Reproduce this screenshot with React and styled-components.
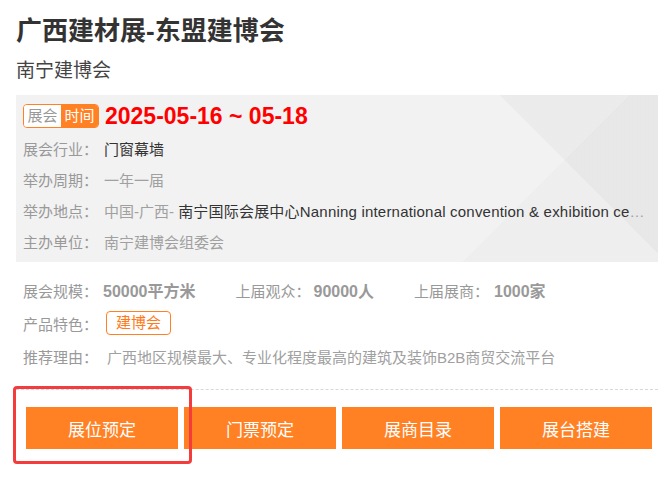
import React from "react";
import styled, { createGlobalStyle } from "styled-components";

const GlobalStyle = createGlobalStyle`
    html, body {
        margin: 0;
        padding: 0;
        background: #fff;
    }
    body {
        font-family: "Liberation Sans", "Noto Sans CJK SC", sans-serif;
        color: #333;
    }
    * {
        box-sizing: border-box;
    }
`;

const Page = styled.div`
    width: 669px;
    min-height: 480px;
    padding: 13px 11px 0 16px;
`;

const Title = styled.h1`
    margin: 0;
    font-size: 26px;
    font-weight: 700;
    line-height: 36px;
    color: #333;
`;

const SubTitle = styled.h2`
    margin: 8px 0 0;
    font-size: 19px;
    font-weight: 400;
    line-height: 28px;
    color: #444;
`;

// grey panel with the faint diagonal facets
const InfoPanel = styled.div`
    margin-top: 10px;
    height: 167px;
    padding: 9px 10px 0 7px;
    background-color: #f2f2f2;
    background-image: linear-gradient(45deg, transparent 460px, rgba(0, 0, 0, 0.028) 460px),
        linear-gradient(135deg, transparent 434px, rgba(0, 0, 0, 0.016) 434px);
`;

const DateRow = styled.div`
    display: flex;
    align-items: center;
    height: 24px;
    margin-bottom: 5px;
`;

const Badge = styled.span`
    display: flex;
    height: 24px;
    border: 1px solid #ff8124;
    border-radius: 4px;
    overflow: hidden;
    font-size: 15px;
    line-height: 22px;
`;

const BadgePart = styled.span`
    width: 37px;
    text-align: center;
    color: ${(props) => (props.filled ? "#fff" : "#999")};
    background: ${(props) => (props.filled ? "#ff8124" : "#fff")};
`;

const DateText = styled.span`
    margin-left: 6px;
    font-size: 23px;
    font-weight: 700;
    color: #f00;
    line-height: 24px;
`;

const Row = styled.div`
    display: flex;
    align-items: center;
    height: ${(props) => props.height || "31px"};
    font-size: 15px;
    white-space: nowrap;
`;

const Label = styled.span`
    flex: none;
    width: ${(props) => props.width || "81px"};
    color: #999;
`;

const Value = styled.span`
    flex: 1;
    min-width: 0;
    overflow: hidden;
    text-overflow: ellipsis;
    color: ${(props) => (props.dark ? "#333" : "#a0a0a0")};
`;

const Dark = styled.span`
    color: #333;
    letter-spacing: 0.2px;
`;

const Details = styled.div`
    padding: 12px 7px 0;
    display: flex;
    flex-direction: column;
    gap: 1px;
`;

const Stat = styled.span`
    display: flex;
    align-items: center;
    margin-right: 40px;
`;

const StatValue = styled.span`
    font-size: 16px;
    font-weight: 700;
    color: #999;
`;

const Tag = styled.span`
    display: inline-block;
    height: 24px;
    padding: 0 9px;
    border: 1px solid #ff8124;
    border-radius: 4px;
    color: #ff7a1a;
    font-size: 15px;
    line-height: 22px;
`;

const Divider = styled.div`
    margin-top: 17px;
    border-top: 1px dashed #d8d8d8;
`;

const Actions = styled.div`
    position: relative;
    display: grid;
    grid-template-columns: repeat(4, 152px);
    column-gap: 6px;
    margin-top: 17px;
    padding-left: 10px;
`;

const ActionButton = styled.button`
    height: 42px;
    border: none;
    padding: 0;
    background: #ff8124;
    color: #fff;
    font-family: "Liberation Sans", "Noto Sans CJK SC", sans-serif;
    font-size: 17px;
    cursor: pointer;
`;

const Highlight = styled.div`
    position: absolute;
    top: -21px;
    left: -3px;
    width: 179px;
    height: 78px;
    border: 3px solid #f43c3c;
    border-radius: 4px;
    pointer-events: none;
`;

const actions = ["展位预定", "门票预定", "展商目录", "展台搭建"];

export default function App() {
    return (
        <Page>
            <GlobalStyle />
            <Title>广西建材展-东盟建博会</Title>
            <SubTitle>南宁建博会</SubTitle>

            <InfoPanel>
                <DateRow>
                    <Badge>
                        <BadgePart>展会</BadgePart>
                        <BadgePart filled>时间</BadgePart>
                    </Badge>
                    <DateText>2025-05-16 ~ 05-18</DateText>
                </DateRow>
                <Row>
                    <Label>展会行业：</Label>
                    <Value dark>门窗幕墙</Value>
                </Row>
                <Row>
                    <Label>举办周期：</Label>
                    <Value>一年一届</Value>
                </Row>
                <Row>
                    <Label>举办地点：</Label>
                    <Value>
                        中国-广西- <Dark>南宁国际会展中心Nanning international convention &amp; exhibition center</Dark>
                    </Value>
                </Row>
                <Row>
                    <Label>主办单位：</Label>
                    <Value>南宁建博会组委会</Value>
                </Row>
            </InfoPanel>

            <Details>
                <Row height="32px">
                    <Stat>
                        <Label width="80px">展会规模：</Label>
                        <StatValue>50000平方米</StatValue>
                    </Stat>
                    <Stat>
                        <Label width="78px">上届观众：</Label>
                        <StatValue>90000人</StatValue>
                    </Stat>
                    <Stat>
                        <Label width="80px">上届展商：</Label>
                        <StatValue>1000家</StatValue>
                    </Stat>
                </Row>
                <Row height="32px">
                    <Label width="83px">产品特色：</Label>
                    <Tag>建博会</Tag>
                </Row>
                <Row height="32px">
                    <Label width="84px">推荐理由：</Label>
                    <Value>广西地区规模最大、专业化程度最高的建筑及装饰B2B商贸交流平台</Value>
                </Row>
            </Details>

            <Divider />

            <Actions>
                {actions.map((text) => (
                    <ActionButton key={text}>{text}</ActionButton>
                ))}
                <Highlight />
            </Actions>
        </Page>
    );
}
